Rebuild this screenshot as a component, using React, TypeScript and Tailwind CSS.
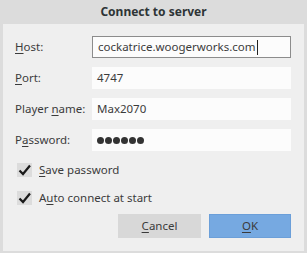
import React from "react";

const U = ({ c }: { c: string }) => <span className="underline underline-offset-2 decoration-1">{c}</span>;

const Check = () => (
  <span className="w-[15px] h-[14px] bg-[#dcdcdc] flex items-center justify-center">
    <svg width="15" height="14" viewBox="0 0 15 14">
      <path d="M2.5 7.5 L6 11 L13 2.5" fill="none" stroke="#1a1a1a" strokeWidth="2.2" />
    </svg>
  </span>
);

const Dots = () => (
  <span className="flex gap-[1px]">
    {[0, 1, 2, 3, 4, 5].map((i) => (
      <span key={i} className="w-[7px] h-[7px] rounded-full bg-[#333]" />
    ))}
  </span>
);

export default function App() {
  const rows: { label: React.ReactNode; value: React.ReactNode; focused?: boolean }[] = [
    { label: <><U c="H" />ost:</>, value: <>cockatrice.woogerworks.com<span className="inline-block w-px h-[15px] bg-[#222] align-middle ml-px" /></>, focused: true },
    { label: <><U c="P" />ort:</>, value: "4747" },
    { label: <>Player <U c="n" />ame:</>, value: "Max2070" },
    { label: <>P<U c="a" />ssword:</>, value: <Dots /> },
  ];
  return (
    <div className="w-[307px] h-[253px] bg-[#dcdcdc] flex flex-col text-[#3b3b3b]" style={{ fontFamily: '"Noto Sans", "Open Sans", sans-serif' }}>
      <div className="h-[24px] flex items-center justify-center font-bold text-[12px] text-[#2e3436]">Connect to server</div>
      <div className="mx-[3px] h-[227px] bg-[#efefef] flex flex-col pl-[12px] pr-[13px] pt-[12px] text-[11.5px]">
        <div className="flex flex-col gap-[9px]">
          {rows.map((r, i) => (
            <div key={i} className="flex items-center h-[22px]">
              <div className="w-[77px] shrink-0 whitespace-nowrap">{r.label}</div>
              <div className={`flex-1 h-[22px] flex items-center pl-[5px] bg-[#fcfcfc] ${r.focused ? "border border-[#8c8c8c] pl-[4px]" : ""}`}>{r.value}</div>
            </div>
          ))}
        </div>
        <div className="flex flex-col gap-[13px] mt-[11px] pl-[2px]">
          <div className="flex items-center gap-[7px] h-[15px]"><Check /><span><U c="S" />ave password</span></div>
          <div className="flex items-center gap-[7px] h-[15px]"><Check /><span>A<U c="u" />to connect at start</span></div>
        </div>
        <div className="flex justify-end gap-[8px] mt-[9px]">
          <div className="w-[83px] h-[24px] bg-[#d8d8d8] flex items-center justify-center"><U c="C" />ancel</div>
          <div className="w-[82px] h-[24px] bg-[#76a9e1] border border-[#6b9fd9] flex items-center justify-center"><U c="O" />K</div>
        </div>
      </div>
    </div>
  );
}
